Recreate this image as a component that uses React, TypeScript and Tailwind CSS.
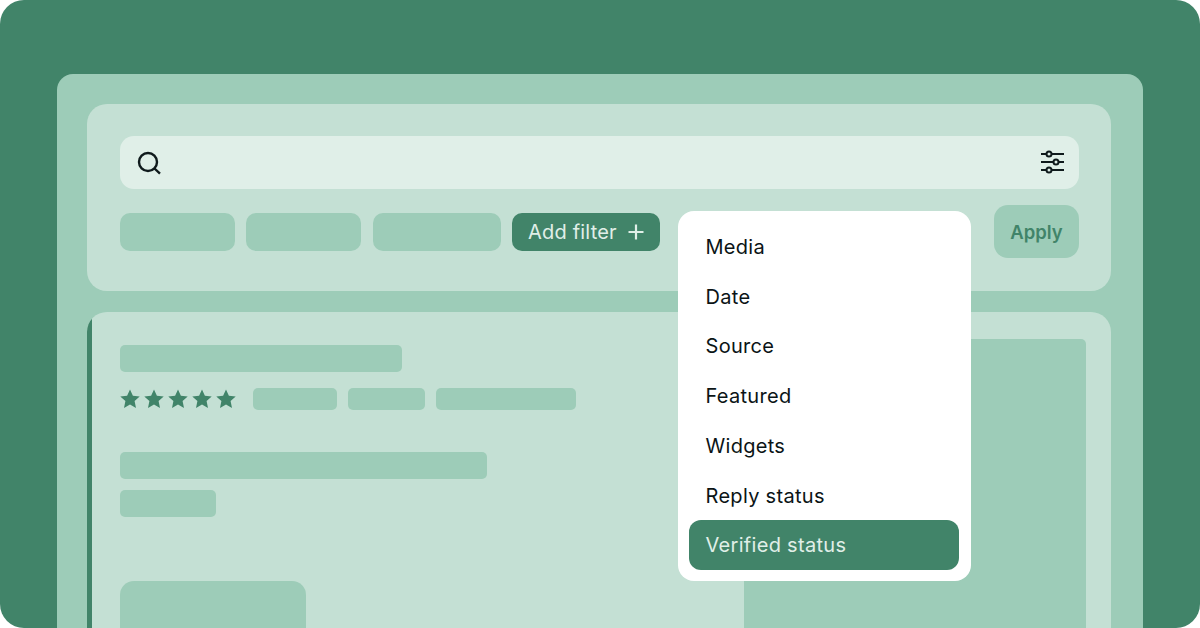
import React from 'react';

const menuItems = ['Media', 'Date', 'Source', 'Featured', 'Widgets', 'Reply status'];

const Star = () => (
  <svg width="20" height="20" viewBox="0 0 20 20" className="fill-[#418469]">
    <polygon points="10,0.5 12.9,6.7 19.7,7.4 14.6,12.1 16,18.9 10,15.5 4,18.9 5.4,12.1 0.3,7.4 7.1,6.7" />
  </svg>
);

const SearchIcon = () => (
  <svg width="26" height="26" viewBox="0 0 26 26" fill="none" stroke="#0f1a1c" strokeWidth="2.4">
    <circle cx="11" cy="12" r="9" />
    <path d="M17.5 18.5l5.5 5.2" />
  </svg>
);

const SlidersIcon = () => (
  <svg width="24" height="24" viewBox="0 0 24 24" fill="none" stroke="#0f1a1c" strokeWidth="2" className="mb-px">
    <path d="M1 4h23M1 12h23M1 20h23" />
    <circle cx="9" cy="4" r="2.5" fill="#e0efe8" />
    <circle cx="16" cy="12" r="2.5" fill="#e0efe8" />
    <circle cx="9" cy="20" r="2.5" fill="#e0efe8" />
  </svg>
);

const PlusIcon = () => (
  <svg width="16" height="16" viewBox="0 0 16 16" fill="none" stroke="#e0efe8" strokeWidth="2.2">
    <path d="M8 0.5v15M0.5 8h15" />
  </svg>
);

export default function App() {
  return (
    <div className="h-[628px] w-[1200px] overflow-hidden bg-white font-['Inter',sans-serif]">
      <div className="h-full rounded-[24px] bg-[#418469] pl-[57px] pr-[57px] pt-[74px]">
        <div className="relative h-[554px] rounded-t-[16px] bg-[#9dccb8] px-[30px] pt-[30px]">
          {/* filter card */}
          <div className="h-[187px] w-[1024px] rounded-[20px] bg-[#c4e0d4] pl-[33px] pr-[32px] pt-[32px]">
            <div className="flex h-[53px] items-center justify-between rounded-[14px] bg-[#e0efe8] pl-[17px] pr-[15px]">
              <SearchIcon />
              <SlidersIcon />
            </div>
            <div className="mt-[16px] flex h-[53px] items-center">
              <div className="h-[38px] w-[115px] rounded-[10px] bg-[#9dccb8]" />
              <div className="ml-[11px] h-[38px] w-[115px] rounded-[10px] bg-[#9dccb8]" />
              <div className="ml-[12px] h-[38px] w-[128px] rounded-[10px] bg-[#9dccb8]" />
              <div className="ml-[11px] flex h-[38px] w-[148px] items-center rounded-[10px] bg-[#418469] pl-[16px] text-[20px] leading-none text-[#e0efe8]">
                <span className="pt-px tracking-[0.2px]">Add filter</span>
                <span className="ml-[11px] flex"><PlusIcon /></span>
              </div>
              <div className="ml-auto flex h-[53px] w-[85px] items-center justify-center rounded-[14px] bg-[#9dccb8] pt-[2px] text-[18.5px] font-semibold text-[#418469]">
                Apply
              </div>
            </div>
          </div>

          {/* review card */}
          <div className="mt-[21px] flex h-[400px] w-[1024px] overflow-hidden rounded-[20px] bg-[#c4e0d4]">
            <div className="w-[5px] shrink-0 bg-[#418469]" />
            <div className="flex grow justify-between pl-[28px] pr-[25px]">
              <div className="pt-[33px]">
                <div className="h-[27px] w-[282px] rounded-[5px] bg-[#9dccb8]" />
                <div className="mt-[16px] flex h-[22px] items-center">
                  <div className="flex gap-[4px]">
                    <Star />
                    <Star />
                    <Star />
                    <Star />
                    <Star />
                  </div>
                  <div className="ml-[17px] h-[22px] w-[84px] rounded-[5px] bg-[#9dccb8]" />
                  <div className="ml-[11px] h-[22px] w-[77px] rounded-[5px] bg-[#9dccb8]" />
                  <div className="ml-[11px] h-[22px] w-[140px] rounded-[5px] bg-[#9dccb8]" />
                </div>
                <div className="mt-[42px] h-[27px] w-[367px] rounded-[5px] bg-[#9dccb8]" />
                <div className="mt-[11px] h-[27px] w-[96px] rounded-[5px] bg-[#9dccb8]" />
                <div className="mt-[64px] h-[80px] w-[186px] rounded-[14px] bg-[#9dccb8]" />
              </div>
              <div className="mt-[27px] w-[342px] rounded-t-[5px] bg-[#9dccb8]" />
            </div>
          </div>

          {/* dropdown */}
          <div className="absolute left-[621px] top-[137px] w-[292.5px] rounded-[16px] bg-white pb-[11px] pl-[11px] pr-[11.5px] pt-[11px] text-[20px] tracking-[0.3px]">
            {menuItems.map((item) => (
              <div key={item} className="flex h-[49.8px] items-center pl-[16.5px] text-[#0b1416]">
                {item}
              </div>
            ))}
            <div className="-mt-[0.8px] flex h-[50px] items-center rounded-[12px] bg-[#418469] pl-[16.5px] text-[#e0efe8]">
              Verified status
            </div>
          </div>
        </div>
      </div>
    </div>
  );
}
